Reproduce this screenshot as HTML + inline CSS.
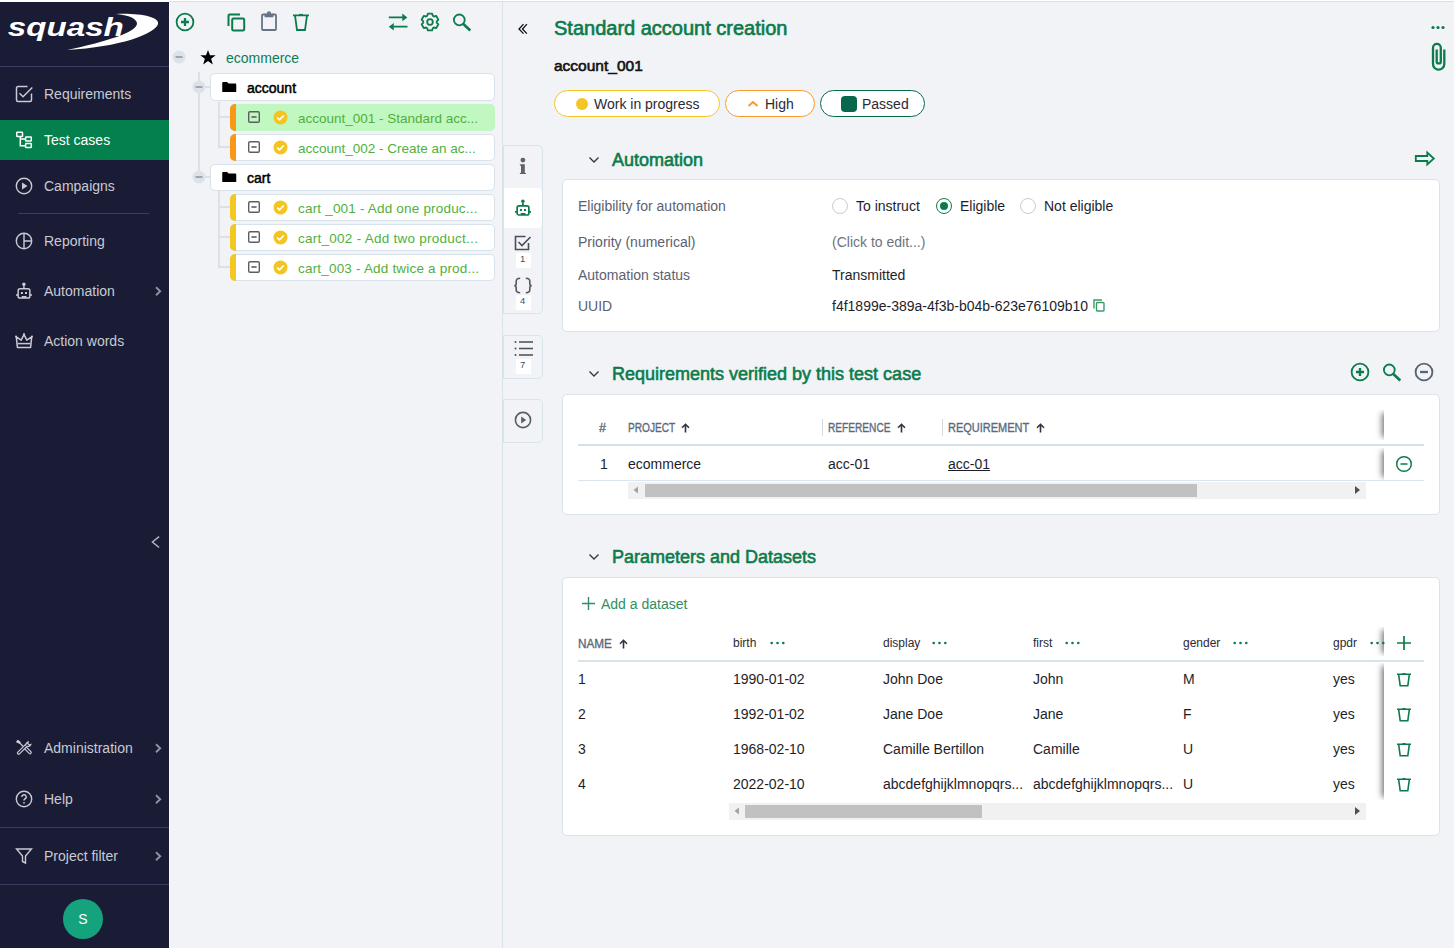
<!DOCTYPE html>
<html><head><meta charset="utf-8">
<style>
*{box-sizing:border-box;margin:0;padding:0}
html,body{width:1454px;height:948px;overflow:hidden;background:#f2f3f7;font-family:"Liberation Sans",sans-serif;font-size:14px;color:#1e1e2a}
.a{position:absolute;white-space:nowrap}
#top{position:absolute;left:0;top:0;width:1454px;height:2px;background:#fff}
#top2{position:absolute;left:169px;top:1px;width:1285px;height:1px;background:#dcdee0}
#side{position:absolute;left:0;top:2px;width:169px;height:946px;background:#1a1c35}
#sideedge{position:absolute;left:169px;top:2px;width:1px;height:946px;background:#fbfbfd}
.sep{position:absolute;height:1px;background:#393c63}
.mi{position:absolute;left:0;width:169px;height:40px;color:#c8cad4;font-size:14px}
.mi .t{position:absolute;left:44px;top:50%;transform:translateY(-50%)}
.mi svg{position:absolute;left:15px;top:50%;transform:translateY(-50%)}
.mi .chev{position:absolute;left:154px;top:50%;transform:translateY(-50%)}
#tree{position:absolute;left:170px;top:2px;width:332px;height:946px;background:#f2f3f7}
#treeedge{position:absolute;left:502px;top:2px;width:1px;height:946px;background:#d9e3ea}
.node{position:absolute;background:#fff;border:1px solid #d8e2ea;border-radius:5px;height:28px}
.tc{position:absolute;background:#fff;box-shadow:inset 0 0 0 1px #d8e2ea;border-radius:5px;height:28px;overflow:hidden}
.tc .bar{position:absolute;left:0;top:0;bottom:0;width:6px}
.tc .t{position:absolute;left:67px;top:50%;transform:translateY(-50%);color:#5caf4e;font-size:14px}
.green{color:#0c7b4b}
.card{position:absolute;left:562px;width:878px;background:#fff;border:1px solid #d9e3ea;border-radius:5px}
.lbl{color:#5d6170}
.sect{position:absolute;left:612px;font-size:18px;color:#0c7b4b;-webkit-text-stroke:.6px #0c7b4b}
.hdr{color:#5b6a7d;font-size:12.5px;-webkit-text-stroke:.35px #5b6a7d;transform-origin:0 0}
</style></head><body>
<div id="top"></div><div id="top2"></div>
<div id="side">
 <svg class="a" style="left:0;top:-2px" width="169" height="66" viewBox="0 0 169 66">
  <path d="M116 14 C140 13 160 17 158 24 C155 34 120 47 67 50 C105 42 138 32 137 23 C136 18 128 15 116 14 Z" fill="#fff"/>
  <text x="6" y="36" font-family="Liberation Sans" font-style="italic" font-weight="bold" font-size="25.5" fill="#fff" transform="scale(1.3,1)">squash</text>
 </svg>
</div>
<div class="sep" style="left:0;top:66px;width:169px"></div>
<div class="mi" style="top:74px"><svg width="19" height="18" viewBox="0 0 19 18" fill="none" stroke="#c8cad4" stroke-width="1.5"><path d="M12.5 1.5H3A1.5 1.5 0 0 0 1.5 3v12A1.5 1.5 0 0 0 3 16.5h12a1.5 1.5 0 0 0 1.5-1.5V8.5"/><path d="M4.5 8.3 8 11.8l9.3-9.3"/></svg><span class="t">Requirements</span></div>
<div class="mi" style="top:120px;background:#03804b;color:#fff"><svg width="18" height="18" viewBox="0 0 18 18" fill="none" stroke="#fff" stroke-width="1.5"><rect x="1.8" y="1.2" width="5.7" height="4.4" rx=".5"/><rect x="10.6" y="6" width="5.7" height="4.1" rx=".5"/><rect x="10.6" y="12.6" width="5.7" height="4" rx=".5"/><path d="M5.3 5.6v9.1h5.3M5.3 8h5.3"/></svg><span class="t">Test cases</span></div>
<div class="mi" style="top:166px"><svg width="18" height="18" viewBox="0 0 18 18" fill="none" stroke="#c8cad4" stroke-width="1.4"><circle cx="9" cy="9" r="7.7"/><path d="M7 5.5v7l5.5-3.5z" fill="#c8cad4" stroke="none"/></svg><span class="t">Campaigns</span></div>
<div class="sep" style="left:18px;top:213px;width:131px"></div>
<div class="mi" style="top:221px"><svg width="18" height="18" viewBox="0 0 18 18" fill="none" stroke="#c8cad4" stroke-width="1.4"><circle cx="9" cy="9" r="7.7"/><path d="M9 1.3v15.4M9 9h7.7"/></svg><span class="t">Reporting</span></div>
<div class="mi" style="top:271px"><svg width="20" height="18" viewBox="0 0 20 18" fill="none" stroke="#c8cad4" stroke-width="1.5" style="left:14px"><circle cx="9.9" cy="2.2" r="1.7" fill="#c8cad4" stroke="none"/><path d="M9.9 3.5V6.5"/><rect x="4.15" y="6.8" width="11.7" height="9.2" rx="1.8"/><path d="M2 12.9h2.2M15.8 12.9H18"/><rect x="6.9" y="10" width="2" height="2" fill="#c8cad4" stroke="none"/><rect x="11" y="10" width="2" height="2" fill="#c8cad4" stroke="none"/><rect x="7.8" y="14" width="4.6" height="2" fill="#c8cad4" stroke="none"/></svg><span class="t">Automation</span><svg class="chev" width="8" height="12" viewBox="0 0 8 12" fill="none" stroke="#8f92a0" stroke-width="1.9"><path d="M2 2.2l4.2 4-4.2 4"/></svg></div>
<div class="mi" style="top:321px"><svg width="18" height="18" viewBox="0 0 18 18" fill="none" stroke="#c8cad4" stroke-width="1.5" stroke-linejoin="round"><path d="M2.4 15.5L1.3 4.8 6.1 8.2 9 2.6l2.9 5.6 4.8-3.4-1.1 10.7z"/><path d="M2.6 11.6h12.8"/><circle cx="1" cy="4.5" r="1" fill="#c8cad4" stroke="none"/><circle cx="17" cy="4.5" r="1" fill="#c8cad4" stroke="none"/><circle cx="9" cy="1.9" r="1" fill="#c8cad4" stroke="none"/></svg><span class="t">Action words</span></div>
<div class="mi" style="top:728px"><svg width="18" height="18" viewBox="0 0 18 18" fill="none" stroke="#c8cad4" stroke-width="1.2"><path d="M1.8 2.6l1-1 2 1.6.2 1L8 7.2" stroke-width="1.3"/><path d="M2 3l1-1.2 1.6 1.5-.2.9z" fill="#c8cad4"/><path d="M9.6 9.8l4.6 4.6a1.2 1.2 0 0 0 1.7-1.7L11.3 8.1"/><path d="M10.3 5.6 2.8 13.1a1.2 1.2 0 0 0 1.7 1.7L12 7.3c1.5.6 3.3-.3 3.8-1.8l-1.6.5-1.5-1.5.5-1.6c-1.5.4-2.4 2.2-2.9 3.7z"/></svg><span class="t">Administration</span><svg class="chev" width="8" height="12" viewBox="0 0 8 12" fill="none" stroke="#8f92a0" stroke-width="1.9"><path d="M2 2.2l4.2 4-4.2 4"/></svg></div>
<div class="mi" style="top:779px"><svg width="18" height="18" viewBox="0 0 18 18" fill="none" stroke="#c8cad4" stroke-width="1.4"><circle cx="9" cy="9" r="7.7"/><path d="M6.8 7a2.2 2.2 0 1 1 3 2c-.7.3-.8.8-.8 1.6"/><circle cx="9" cy="12.8" r=".9" fill="#c8cad4" stroke="none"/></svg><span class="t">Help</span><svg class="chev" width="8" height="12" viewBox="0 0 8 12" fill="none" stroke="#8f92a0" stroke-width="1.9"><path d="M2 2.2l4.2 4-4.2 4"/></svg></div>
<div class="sep" style="left:0;top:827px;width:169px"></div>
<div class="mi" style="top:836px"><svg width="18" height="18" viewBox="0 0 18 18" fill="none" stroke="#c8cad4" stroke-width="1.4"><path d="M1.5 2h15L10.5 9v7l-3-1.5V9z"/></svg><span class="t">Project filter</span><svg class="chev" width="8" height="12" viewBox="0 0 8 12" fill="none" stroke="#8f92a0" stroke-width="1.9"><path d="M2 2.2l4.2 4-4.2 4"/></svg></div>
<div class="sep" style="left:0;top:884px;width:169px"></div>
<div class="a" style="left:63px;top:899px;width:40px;height:40px;border-radius:50%;background:#14a37d;color:#fff;font-size:14px;text-align:center;line-height:40px">S</div>
<svg class="a" style="left:150px;top:535px" width="11" height="14" viewBox="0 0 11 14" fill="none" stroke="#b4b6c0" stroke-width="1.4"><path d="M9.1 1.6 2.4 7l6.7 5.5"/></svg>
<div id="sideedge"></div>
<div id="tree"></div>
<div id="treeedge"></div>
<!-- tree toolbar -->
<svg class="a" style="left:175px;top:12px" width="20" height="20" viewBox="0 0 20 20" fill="none" stroke="#0c7b4b" stroke-width="1.8"><circle cx="10" cy="10" r="8.4"/><path d="M10 6v8M6 10h8" stroke-width="2.3"/></svg>
<svg class="a" style="left:226px;top:12px" width="21" height="20" viewBox="0 0 21 20" fill="none" stroke="#0c7b4b" stroke-width="2"><path d="M2.5 14V3.5c0-.6.4-1 1-1H14"/><rect x="6.2" y="6.5" width="12" height="12" rx="1.3"/></svg>
<svg class="a" style="left:259px;top:11px" width="20" height="21" viewBox="0 0 20 21" fill="none" stroke="#677385" stroke-width="1.8"><path d="M6.5 3.5H4c-.6 0-1 .4-1 1V18c0 .6.4 1 1 1h12c.6 0 1-.4 1-1V4.5c0-.6-.4-1-1-1h-2.5"/><path d="M6.5 3.5h7v1.8h-7z" fill="#677385"/><circle cx="10" cy="2.3" r="1.2"/></svg>
<svg class="a" style="left:292px;top:12px" width="18" height="20" viewBox="0 0 18 20" fill="none" stroke="#0c7b4b" stroke-width="1.8"><path d="M1 3.3h16M3 3.3l2 14.7h8l2-14.7"/><path d="M7 2.5h4" stroke-width="1.2"/></svg>
<svg class="a" style="left:387px;top:12px" width="22" height="20" viewBox="0 0 22 20"><path d="M1.8 5.4h14.5M6.5 14.7h14" fill="none" stroke="#0c7b4b" stroke-width="1.8"/><path d="M15.3 1.6l5 3.8-5 3.8z M6.8 10.9l-5 3.8 5 3.8z" fill="#0c7b4b"/></svg>
<svg class="a" style="left:420px;top:12px" width="20" height="20" viewBox="0 0 20 20" fill="none" stroke="#0c7b4b" stroke-width="1.8" stroke-linejoin="round"><path d="M7.23 3.79 L7.90 1.56 L12.10 1.56 L12.77 3.79 L14.00 4.50 L16.26 3.96 L18.36 7.60 L16.76 9.29 L16.76 10.71 L18.36 12.40 L16.26 16.04 L14.00 15.50 L12.77 16.21 L12.10 18.44 L7.90 18.44 L7.23 16.21 L6.00 15.50 L3.74 16.04 L1.64 12.40 L3.24 10.71 L3.24 9.29 L1.64 7.60 L3.74 3.96 L6.00 4.50Z"/><circle cx="10" cy="10" r="2.8"/></svg>
<svg class="a" style="left:452px;top:12px" width="20" height="20" viewBox="0 0 20 20" fill="none" stroke="#0c7b4b"><circle cx="7.3" cy="7.9" r="5.4" stroke-width="1.8"/><path d="M11.3 12l7 6.5" stroke-width="2.6"/></svg>
<!-- tree lines -->
<div class="a" style="left:198px;top:72px;width:2px;height:105px;background:#dfe0e4"></div><div class="a" style="left:204px;top:86px;width:6px;height:2px;background:#dfe0e4"></div><div class="a" style="left:204px;top:176px;width:6px;height:2px;background:#dfe0e4"></div>
<div class="a" style="left:218px;top:102px;width:2px;height:46px;background:#dfe0e4"></div><div class="a" style="left:218px;top:191px;width:2px;height:76px;background:#dfe0e4"></div>
<div class="a" style="left:218px;top:116px;width:12px;height:2px;background:#dfe0e4"></div>
<div class="a" style="left:218px;top:146px;width:12px;height:2px;background:#dfe0e4"></div>
<div class="a" style="left:218px;top:206px;width:12px;height:2px;background:#dfe0e4"></div>
<div class="a" style="left:218px;top:236px;width:12px;height:2px;background:#dfe0e4"></div>
<div class="a" style="left:218px;top:266px;width:12px;height:2px;background:#dfe0e4"></div>
<div class="a" style="left:218px;top:147px;width:0;height:0"></div>
<!-- root -->
<svg class="a" style="left:172px;top:50px" width="14" height="14" viewBox="0 0 14 14"><circle cx="7" cy="7" r="6.5" fill="#dce2e8"/><rect x="3.5" y="6.2" width="7" height="1.6" fill="#8e97a3"/></svg>
<svg class="a" style="left:200px;top:50px" width="16" height="15" viewBox="0 0 24 23"><path d="M12 0l3 8.2h8.8l-7 5.3 2.6 8.6L12 17l-7.4 5.1 2.6-8.6-7-5.3H9z" fill="#000"/></svg>
<span class="a" style="left:226px;top:50px;font-size:14px;color:#0d7d55">ecommerce</span>
<!-- account folder -->
<div class="node" style="left:210px;top:73px;width:285px"></div>
<svg class="a" style="left:192px;top:80px" width="14" height="14" viewBox="0 0 14 14"><circle cx="7" cy="7" r="6.5" fill="#dce2e8"/><rect x="3.5" y="6.2" width="7" height="1.6" fill="#8e97a3"/></svg>
<svg class="a" style="left:222px;top:81.5px" width="14.5" height="10.5" viewBox="0 0 16 12"><path d="M0 1.2C0 .5.5 0 1.2 0h4.3l1.8 1.8h7.5c.7 0 1.2.5 1.2 1.2v7.8c0 .7-.5 1.2-1.2 1.2H1.2C.5 12 0 11.5 0 10.8z" fill="#000"/></svg>
<span class="a" style="left:247px;top:80px;font-size:14px;color:#000;-webkit-text-stroke:.5px #000">account</span>
<div class="tc" style="left:230px;top:104px;width:265px;height:27px;background:#c1f7c0;box-shadow:none"><div class="bar" style="background:#fb9716"></div></div>
<div class="tc" style="left:230px;top:134px;width:265px;height:27px"><div class="bar" style="background:#fb9716"></div></div>
<!-- cart folder -->
<div class="node" style="left:210px;top:164px;width:285px;height:27px"></div>
<svg class="a" style="left:192px;top:170px" width="14" height="14" viewBox="0 0 14 14"><circle cx="7" cy="7" r="6.5" fill="#dce2e8"/><rect x="3.5" y="6.2" width="7" height="1.6" fill="#8e97a3"/></svg>
<svg class="a" style="left:222px;top:171.5px" width="14.5" height="10.5" viewBox="0 0 16 12"><path d="M0 1.2C0 .5.5 0 1.2 0h4.3l1.8 1.8h7.5c.7 0 1.2.5 1.2 1.2v7.8c0 .7-.5 1.2-1.2 1.2H1.2C.5 12 0 11.5 0 10.8z" fill="#000"/></svg>
<span class="a" style="left:247px;top:170px;font-size:14px;color:#000;-webkit-text-stroke:.5px #000">cart</span>
<div class="tc" style="left:230px;top:194px;width:265px;height:27px"><div class="bar" style="background:#f3c823"></div></div>
<div class="tc" style="left:230px;top:224px;width:265px;height:27px"><div class="bar" style="background:#f3c823"></div></div>
<div class="tc" style="left:230px;top:254px;width:265px;height:27px"><div class="bar" style="background:#f3c823"></div></div>
<!-- tc contents -->
<svg class="a" style="left:247px;top:110px" width="14" height="14" viewBox="0 0 14 14" fill="none" stroke="#5b5e63" stroke-width="1.4"><rect x="1.7" y="1.7" width="10.6" height="10.6" rx="1.2"/><path d="M4.4 7h5.2" stroke-width="1.6"/></svg>
<svg class="a" style="left:273px;top:110px" width="15" height="15" viewBox="0 0 15 15"><circle cx="7.5" cy="7.5" r="7" fill="#f3c524"/><path d="M4.2 7.6l2.3 2.3 4.3-4.4" fill="none" stroke="#fff" stroke-width="1.6"/></svg>
<span class="a" style="left:298px;top:111px;font-size:13.5px;color:#4fb03e">account_001 - Standard acc...</span>
<svg class="a" style="left:247px;top:140px" width="14" height="14" viewBox="0 0 14 14" fill="none" stroke="#5b5e63" stroke-width="1.4"><rect x="1.7" y="1.7" width="10.6" height="10.6" rx="1.2"/><path d="M4.4 7h5.2" stroke-width="1.6"/></svg>
<svg class="a" style="left:273px;top:140px" width="15" height="15" viewBox="0 0 15 15"><circle cx="7.5" cy="7.5" r="7" fill="#f3c524"/><path d="M4.2 7.6l2.3 2.3 4.3-4.4" fill="none" stroke="#fff" stroke-width="1.6"/></svg>
<span class="a" style="left:298px;top:141px;font-size:13.5px;color:#4fb03e">account_002 - Create an ac...</span>
<svg class="a" style="left:247px;top:200px" width="14" height="14" viewBox="0 0 14 14" fill="none" stroke="#5b5e63" stroke-width="1.4"><rect x="1.7" y="1.7" width="10.6" height="10.6" rx="1.2"/><path d="M4.4 7h5.2" stroke-width="1.6"/></svg>
<svg class="a" style="left:273px;top:200px" width="15" height="15" viewBox="0 0 15 15"><circle cx="7.5" cy="7.5" r="7" fill="#f3c524"/><path d="M4.2 7.6l2.3 2.3 4.3-4.4" fill="none" stroke="#fff" stroke-width="1.6"/></svg>
<span class="a" style="left:298px;top:201px;font-size:13.5px;color:#4fb03e;letter-spacing:0.19px">cart _001 - Add one produc...</span>
<svg class="a" style="left:247px;top:230px" width="14" height="14" viewBox="0 0 14 14" fill="none" stroke="#5b5e63" stroke-width="1.4"><rect x="1.7" y="1.7" width="10.6" height="10.6" rx="1.2"/><path d="M4.4 7h5.2" stroke-width="1.6"/></svg>
<svg class="a" style="left:273px;top:230px" width="15" height="15" viewBox="0 0 15 15"><circle cx="7.5" cy="7.5" r="7" fill="#f3c524"/><path d="M4.2 7.6l2.3 2.3 4.3-4.4" fill="none" stroke="#fff" stroke-width="1.6"/></svg>
<span class="a" style="left:298px;top:231px;font-size:13.5px;color:#4fb03e;letter-spacing:0.26px">cart_002 - Add two product...</span>
<svg class="a" style="left:247px;top:260px" width="14" height="14" viewBox="0 0 14 14" fill="none" stroke="#5b5e63" stroke-width="1.4"><rect x="1.7" y="1.7" width="10.6" height="10.6" rx="1.2"/><path d="M4.4 7h5.2" stroke-width="1.6"/></svg>
<svg class="a" style="left:273px;top:260px" width="15" height="15" viewBox="0 0 15 15"><circle cx="7.5" cy="7.5" r="7" fill="#f3c524"/><path d="M4.2 7.6l2.3 2.3 4.3-4.4" fill="none" stroke="#fff" stroke-width="1.6"/></svg>
<span class="a" style="left:298px;top:261px;font-size:13.5px;color:#4fb03e;letter-spacing:0.19px">cart_003 - Add twice a prod...</span>

<!-- main header -->
<svg class="a" style="left:516px;top:22px" width="14" height="14" viewBox="0 0 14 14" fill="none" stroke="#111" stroke-width="1.3"><path d="M7.5 2.1 3 7l4.5 4.6M10.9 2.1 6.5 7l4.4 4.6"/></svg>
<span class="a" id="title" style="left:554px;top:17px;font-size:20px;color:#0c7b4b;-webkit-text-stroke:.65px #0c7b4b">Standard account creation</span>
<span class="a" style="left:554px;top:57px;font-size:15.5px;color:#111;-webkit-text-stroke:.6px #111">account_001</span>
<div class="a" style="left:554px;top:90px;width:166px;height:27px;border:1px solid #f3c623;border-radius:14px;background:#fff"></div>
<div class="a" style="left:576px;top:98px;width:12px;height:12px;border-radius:50%;background:#f3c623"></div>
<span class="a" style="left:594px;top:96px;font-size:14px;color:#2a2a35">Work in progress</span>
<div class="a" style="left:725px;top:90px;width:90px;height:27px;border:1px solid #fb9a2a;border-radius:14px;background:#fff"></div>
<svg class="a" style="left:747px;top:100px" width="12" height="8" viewBox="0 0 12 8" fill="none" stroke="#fb9a2a" stroke-width="2"><path d="M1.5 6l4.5-4 4.5 4"/></svg>
<span class="a" style="left:765px;top:96px;font-size:14px;color:#2a2a35">High</span>
<div class="a" style="left:820px;top:90px;width:105px;height:27px;border:1px solid #08684c;border-radius:14px;background:#fff"></div>
<div class="a" style="left:841px;top:96px;width:16px;height:16px;border-radius:4px;background:#08684c"></div>
<span class="a" style="left:862px;top:96px;font-size:14px;color:#2a2a35">Passed</span>
<svg class="a" style="left:1431px;top:25px" width="14" height="5" viewBox="0 0 14 5"><circle cx="2" cy="2.5" r="1.6" fill="#0c7b4b"/><circle cx="7" cy="2.5" r="1.6" fill="#0c7b4b"/><circle cx="12" cy="2.5" r="1.6" fill="#0c7b4b"/></svg>
<svg class="a" style="left:1425px;top:38px" width="27" height="37" viewBox="0 0 27 37" fill="none" stroke="#0c7b4b" stroke-width="2.3"><path d="M19.3 11.5V26a5.65 5.65 0 0 1-11.3 0V9.8a3.9 3.9 0 0 1 7.8 0v13.6a2.05 2.05 0 0 1-4.1 0V11.5"/></svg>

<!-- side tabs -->
<div class="a" style="left:503px;top:145px;width:40px;height:169px;border:1px solid #d9e3ea;border-radius:0 5px 5px 0;background:#f2f3f7"></div>
<div class="a" style="left:504px;top:188px;width:38px;height:40px;background:#fff;border-radius:0 4px 4px 0"></div>
<svg class="a" style="left:518px;top:157px" width="10" height="18" viewBox="0 0 10 18" fill="#606166"><circle cx="4.9" cy="3.1" r="2.4"/><path d="M1.8 7.2h5v8.6c.8 0 1.2.3 1.2.6v.7H1.8v-.7c0-.3.4-.6 1.2-.6V8.7c-.8 0-1.2-.2-1.2-.6z"/></svg>
<svg class="a" style="left:513px;top:199px" width="20" height="18" viewBox="0 0 20 18" fill="none" stroke="#0c7b4b" stroke-width="1.7"><circle cx="9.9" cy="2.2" r="1.7" fill="#0c7b4b" stroke="none"/><path d="M9.9 3.5V6.5"/><rect x="4.15" y="6.8" width="11.7" height="9.2" rx="1.8"/><path d="M2 12.9h2.2M15.8 12.9H18"/><rect x="6.9" y="10" width="2" height="2" fill="#0c7b4b" stroke="none"/><rect x="11" y="10" width="2" height="2" fill="#0c7b4b" stroke="none"/><rect x="7.8" y="14" width="4.6" height="2" fill="#0c7b4b" stroke="none"/></svg>
<svg class="a" style="left:514px;top:234px" width="18" height="18" viewBox="0 0 18 18" fill="none" stroke="#4a4e58" stroke-width="1.6"><path d="M14.5 9v6.5H1.5V2.5h10"/><path d="M4.5 8l3.5 3.5 8.5-8.5"/></svg>
<div class="a" style="left:516px;top:253px;width:15px;height:15px;background:#fff"></div>
<span class="a" style="left:520px;top:253px;font-size:9.5px;color:#4a4e58">1</span>
<svg class="a" style="left:513px;top:277px" width="20" height="17" viewBox="0 0 20 17" fill="none" stroke="#56585e" stroke-width="1.6"><path d="M7.2 1.3C4.5 1.3 3.2 2.3 3.2 4.5v2C3.2 8 2.5 8.7 1.3 8.7c1.2 0 1.9.7 1.9 2.3v1.8c0 2 1.3 3 4 3M12.8 1.3c2.7 0 4 1 4 3.2v2c0 1.5.7 2.2 1.9 2.2-1.2 0-1.9.7-1.9 2.3v1.8c0 2-1.3 3-4 3"/></svg>
<div class="a" style="left:516px;top:295px;width:15px;height:15px;background:#fff"></div>
<span class="a" style="left:520px;top:295px;font-size:9.5px;color:#4a4e58">4</span>

<div class="a" style="left:503px;top:335px;width:40px;height:44px;border:1px solid #d9e3ea;border-radius:0 5px 5px 0"></div>
<svg class="a" style="left:514px;top:340px" width="20" height="17" viewBox="0 0 20 17" fill="none" stroke="#4a4e58" stroke-width="1.5"><path d="M5 2h14M5 8.5h14M5 15h14"/><circle cx="1.5" cy="2" r="1" fill="#4a4e58" stroke="none"/><circle cx="1.5" cy="8.5" r="1" fill="#4a4e58" stroke="none"/><circle cx="1.5" cy="15" r="1" fill="#4a4e58" stroke="none"/></svg>
<div class="a" style="left:516px;top:359px;width:15px;height:15px;background:#fff"></div>
<span class="a" style="left:520px;top:359px;font-size:9.5px;color:#4a4e58">7</span>

<div class="a" style="left:503px;top:399px;width:40px;height:44px;border:1px solid #d9e3ea;border-radius:0 5px 5px 0"></div>
<svg class="a" style="left:514px;top:411px" width="18" height="18" viewBox="0 0 18 18" fill="none" stroke="#5a5d64" stroke-width="1.6"><circle cx="9" cy="9" r="7.6"/><path d="M7.2 5.5v7l5-3.5z" fill="#5a5d64" stroke="none"/></svg>

<!-- Automation section -->
<svg class="a" style="left:588px;top:156px" width="12" height="8" viewBox="0 0 12 8" fill="none" stroke="#333" stroke-width="1.3"><path d="M1.5 1.5l4.5 4.5 4.5-4.5"/></svg>
<span class="a sect" style="top:150px">Automation</span>
<svg class="a" style="left:1414px;top:150px" width="22" height="17" viewBox="0 0 22 17" fill="none" stroke="#0c7b4b" stroke-width="1.8"><path d="M1.8 6h11.5V2.5l6.5 6-6.5 6v-3.5H1.8z"/></svg>
<div class="card" style="top:179px;height:153px"></div>
<span class="a lbl" style="left:578px;top:198px">Eligibility for automation</span>
<span class="a lbl" style="left:578px;top:234px">Priority (numerical)</span>
<span class="a lbl" style="left:578px;top:267px">Automation status</span>
<span class="a lbl" style="left:578px;top:298px">UUID</span>
<div class="a" style="left:832px;top:198px;width:16px;height:16px;border:1px solid #c9ccd2;border-radius:50%;background:#fff"></div>
<span class="a" style="left:856px;top:198px">To instruct</span>
<div class="a" style="left:936px;top:198px;width:16px;height:16px;border:1px solid #0c7b4b;border-radius:50%;background:#fff"></div>
<div class="a" style="left:940px;top:202px;width:8px;height:8px;border-radius:50%;background:#0c7b4b"></div>
<span class="a" style="left:960px;top:198px">Eligible</span>
<div class="a" style="left:1020px;top:198px;width:16px;height:16px;border:1px solid #c9ccd2;border-radius:50%;background:#fff"></div>
<span class="a" style="left:1044px;top:198px">Not eligible</span>
<span class="a" style="left:832px;top:234px;color:#6d7380">(Click to edit...)</span>
<span class="a" style="left:832px;top:267px">Transmitted</span>
<span class="a" style="left:832px;top:298px">f4f1899e-389a-4f3b-b04b-623e76109b10</span>
<svg class="a" style="left:1093px;top:299px" width="12" height="13" viewBox="0 0 12 13" fill="none" stroke="#3b9a6a" stroke-width="1.4"><path d="M1 9.5V1h8"/><rect x="3.5" y="3.5" width="7.5" height="8.5" rx="1"/></svg>

<!-- Requirements section -->
<svg class="a" style="left:588px;top:370px" width="12" height="8" viewBox="0 0 12 8" fill="none" stroke="#333" stroke-width="1.3"><path d="M1.5 1.5l4.5 4.5 4.5-4.5"/></svg>
<span class="a sect" style="top:364px">Requirements verified by this test case</span>
<svg class="a" style="left:1350px;top:362px" width="20" height="20" viewBox="0 0 20 20" fill="none" stroke="#0c7b4b" stroke-width="1.8"><circle cx="10" cy="10" r="8.4"/><path d="M10 6v8M6 10h8" stroke-width="2.3"/></svg>
<svg class="a" style="left:1382px;top:362px" width="20" height="20" viewBox="0 0 20 20" fill="none" stroke="#0c7b4b"><circle cx="7.3" cy="7.9" r="5.4" stroke-width="1.8"/><path d="M11.3 12l7 6.5" stroke-width="2.6"/></svg>
<svg class="a" style="left:1414px;top:362px" width="20" height="20" viewBox="0 0 20 20" fill="none" stroke="#5b6574" stroke-width="1.9"><circle cx="10" cy="10" r="8.4"/><path d="M6 10h8" stroke-width="2.3"/></svg>
<div class="card" style="top:394px;height:121px"></div><div class="a" style="left:1384px;top:410px;width:40px;height:30px;background:#fff;box-shadow:-5px 0 6px -3px rgba(0,0,0,.55);clip-path:inset(0 0 0 -12px)"></div><div class="a" style="left:1384px;top:448px;width:40px;height:32px;background:#fff;box-shadow:-5px 0 6px -3px rgba(0,0,0,.55);clip-path:inset(0 0 0 -12px)"></div>
<span class="a hdr" style="left:599px;top:421px">#</span>
<span class="a hdr" style="left:628px;top:421px;transform:scaleX(.81)">PROJECT</span><svg class="a" style="left:681px;top:423px" width="9" height="10" viewBox="0 0 9 10" fill="none" stroke="#2f3440" stroke-width="1.6"><path d="M4.5 9.5V1.5M1 4.8l3.5-3.5 3.5 3.5"/></svg>
<span class="a hdr" style="left:828px;top:421px;transform:scaleX(.81)">REFERENCE</span><svg class="a" style="left:897px;top:423px" width="9" height="10" viewBox="0 0 9 10" fill="none" stroke="#2f3440" stroke-width="1.6"><path d="M4.5 9.5V1.5M1 4.8l3.5-3.5 3.5 3.5"/></svg>
<span class="a hdr" style="left:948px;top:421px;transform:scaleX(.88)">REQUIREMENT</span><svg class="a" style="left:1036px;top:423px" width="9" height="10" viewBox="0 0 9 10" fill="none" stroke="#2f3440" stroke-width="1.6"><path d="M4.5 9.5V1.5M1 4.8l3.5-3.5 3.5 3.5"/></svg>
<div class="a" style="left:822px;top:419px;width:1px;height:17px;background:#d5d8de"></div>
<div class="a" style="left:942px;top:419px;width:1px;height:17px;background:#d5d8de"></div>
<div class="a" style="left:578px;top:444px;width:846px;height:2px;background:#d5e1e8"></div>
<span class="a" style="left:600px;top:456px">1</span>
<span class="a" style="left:628px;top:456px">ecommerce</span>
<span class="a" style="left:828px;top:456px">acc-01</span>
<span class="a" style="left:948px;top:456px;text-decoration:underline">acc-01</span>
<div class="a" style="left:578px;top:480px;width:846px;height:1px;background:#dce5eb"></div>
<svg class="a" style="left:1395px;top:455px" width="18" height="18" viewBox="0 0 18 18" fill="none" stroke="#0c7b4b" stroke-width="1.5"><circle cx="9" cy="9" r="7.3"/><path d="M5.5 9h7"/></svg>
<div class="a" style="left:628px;top:482px;width:738px;height:17px;background:#f1f1f1"></div>
<div class="a" style="left:645px;top:484px;width:552px;height:13px;background:#c1c1c1"></div>
<svg class="a" style="left:633px;top:486px" width="6" height="8" viewBox="0 0 6 8"><path d="M5 .5v7L.5 4z" fill="#a3a3a3"/></svg>
<svg class="a" style="left:1355px;top:486px" width="6" height="8" viewBox="0 0 6 8"><path d="M0 0v8l5-4z" fill="#505050"/></svg>

<!-- Parameters section -->
<svg class="a" style="left:588px;top:553px" width="12" height="8" viewBox="0 0 12 8" fill="none" stroke="#333" stroke-width="1.3"><path d="M1.5 1.5l4.5 4.5 4.5-4.5"/></svg>
<span class="a sect" style="top:547px">Parameters and Datasets</span>
<div class="card" style="top:577px;height:259px"></div><div class="a" style="left:1384px;top:627px;width:40px;height:29px;background:#fff;box-shadow:-5px 0 6px -3px rgba(0,0,0,.55);clip-path:inset(0 0 0 -12px)"></div><div class="a" style="left:1384px;top:663px;width:40px;height:137px;background:#fff;box-shadow:-5px 0 6px -3px rgba(0,0,0,.55);clip-path:inset(0 0 0 -12px)"></div>
<svg class="a" style="left:582px;top:597px" width="13" height="13" viewBox="0 0 13 13" fill="none" stroke="#2d8f63" stroke-width="1.4"><path d="M6.5 0v13M0 6.5h13"/></svg>
<span class="a" style="left:601px;top:596px;color:#2d8f63">Add a dataset</span>
<span class="a hdr" style="left:578px;top:637px;transform:scaleX(.94)">NAME</span><svg class="a" style="left:619px;top:639px" width="9" height="10" viewBox="0 0 9 10" fill="none" stroke="#2f3440" stroke-width="1.6"><path d="M4.5 9.5V1.5M1 4.8l3.5-3.5 3.5 3.5"/></svg>
<span class="a" style="left:733px;top:636px;font-size:12px;color:#2a2a35">birth</span>
<svg class="a" style="left:770px;top:641px" width="15" height="4" viewBox="0 0 15 4"><circle cx="1.7" cy="2" r="1.3" fill="#0c7b4b"/><circle cx="7.5" cy="2" r="1.3" fill="#0c7b4b"/><circle cx="13.3" cy="2" r="1.3" fill="#0c7b4b"/></svg>
<span class="a" style="left:883px;top:636px;font-size:12px;color:#2a2a35">display</span>
<svg class="a" style="left:932px;top:641px" width="15" height="4" viewBox="0 0 15 4"><circle cx="1.7" cy="2" r="1.3" fill="#0c7b4b"/><circle cx="7.5" cy="2" r="1.3" fill="#0c7b4b"/><circle cx="13.3" cy="2" r="1.3" fill="#0c7b4b"/></svg>
<span class="a" style="left:1033px;top:636px;font-size:12px;color:#2a2a35">first</span>
<svg class="a" style="left:1065px;top:641px" width="15" height="4" viewBox="0 0 15 4"><circle cx="1.7" cy="2" r="1.3" fill="#0c7b4b"/><circle cx="7.5" cy="2" r="1.3" fill="#0c7b4b"/><circle cx="13.3" cy="2" r="1.3" fill="#0c7b4b"/></svg>
<span class="a" style="left:1183px;top:636px;font-size:12px;color:#2a2a35">gender</span>
<svg class="a" style="left:1233px;top:641px" width="15" height="4" viewBox="0 0 15 4"><circle cx="1.7" cy="2" r="1.3" fill="#0c7b4b"/><circle cx="7.5" cy="2" r="1.3" fill="#0c7b4b"/><circle cx="13.3" cy="2" r="1.3" fill="#0c7b4b"/></svg>
<span class="a" style="left:1333px;top:636px;font-size:12px;color:#2a2a35">gpdr</span>
<svg class="a" style="left:1370px;top:641px" width="15" height="4" viewBox="0 0 15 4"><circle cx="1.7" cy="2" r="1.3" fill="#0c7b4b"/><circle cx="7.5" cy="2" r="1.3" fill="#0c7b4b"/><circle cx="13.3" cy="2" r="1.3" fill="#0c7b4b"/></svg>
<div class="a" style="left:578px;top:660px;width:846px;height:2px;background:#d9e4ea"></div>
<span class="a" style="left:578px;top:671px">1</span>
<span class="a" style="left:733px;top:671px">1990-01-02</span>
<span class="a" style="left:883px;top:671px">John Doe</span>
<span class="a" style="left:1033px;top:671px">John</span>
<span class="a" style="left:1183px;top:671px">M</span>
<span class="a" style="left:1333px;top:671px">yes</span>
<svg class="a" style="left:1396px;top:670px" width="16" height="18" viewBox="0 0 16 18" fill="none" stroke="#0c7b4b" stroke-width="1.6"><path d="M1 4.2h14M2.6 4.2l1.6 11.6h7.6l1.6-11.6"/><path d="M6.5 3.6h3" stroke-width="1.2"/></svg>
<span class="a" style="left:578px;top:706px">2</span>
<span class="a" style="left:733px;top:706px">1992-01-02</span>
<span class="a" style="left:883px;top:706px">Jane Doe</span>
<span class="a" style="left:1033px;top:706px">Jane</span>
<span class="a" style="left:1183px;top:706px">F</span>
<span class="a" style="left:1333px;top:706px">yes</span>
<svg class="a" style="left:1396px;top:705px" width="16" height="18" viewBox="0 0 16 18" fill="none" stroke="#0c7b4b" stroke-width="1.6"><path d="M1 4.2h14M2.6 4.2l1.6 11.6h7.6l1.6-11.6"/><path d="M6.5 3.6h3" stroke-width="1.2"/></svg>
<span class="a" style="left:578px;top:741px">3</span>
<span class="a" style="left:733px;top:741px">1968-02-10</span>
<span class="a" style="left:883px;top:741px">Camille Bertillon</span>
<span class="a" style="left:1033px;top:741px">Camille</span>
<span class="a" style="left:1183px;top:741px">U</span>
<span class="a" style="left:1333px;top:741px">yes</span>
<svg class="a" style="left:1396px;top:740px" width="16" height="18" viewBox="0 0 16 18" fill="none" stroke="#0c7b4b" stroke-width="1.6"><path d="M1 4.2h14M2.6 4.2l1.6 11.6h7.6l1.6-11.6"/><path d="M6.5 3.6h3" stroke-width="1.2"/></svg>
<span class="a" style="left:578px;top:776px">4</span>
<span class="a" style="left:733px;top:776px">2022-02-10</span>
<span class="a" style="left:883px;top:776px">abcdefghijklmnopqrs...</span>
<span class="a" style="left:1033px;top:776px">abcdefghijklmnopqrs...</span>
<span class="a" style="left:1183px;top:776px">U</span>
<span class="a" style="left:1333px;top:776px">yes</span>
<svg class="a" style="left:1396px;top:775px" width="16" height="18" viewBox="0 0 16 18" fill="none" stroke="#0c7b4b" stroke-width="1.6"><path d="M1 4.2h14M2.6 4.2l1.6 11.6h7.6l1.6-11.6"/><path d="M6.5 3.6h3" stroke-width="1.2"/></svg>

<svg class="a" style="left:1396px;top:635px" width="16" height="16" viewBox="0 0 16 16" fill="none" stroke="#0c7b4b" stroke-width="1.7"><path d="M8 1v14M1 8h14"/></svg>
<div class="a" style="left:729px;top:803px;width:637px;height:17px;background:#f1f1f1"></div>
<div class="a" style="left:745px;top:805px;width:237px;height:13px;background:#c1c1c1"></div>
<svg class="a" style="left:734px;top:807px" width="6" height="8" viewBox="0 0 6 8"><path d="M5 .5v7L.5 4z" fill="#a3a3a3"/></svg>
<svg class="a" style="left:1355px;top:807px" width="6" height="8" viewBox="0 0 6 8"><path d="M0 0v8l5-4z" fill="#505050"/></svg>
</body></html>
